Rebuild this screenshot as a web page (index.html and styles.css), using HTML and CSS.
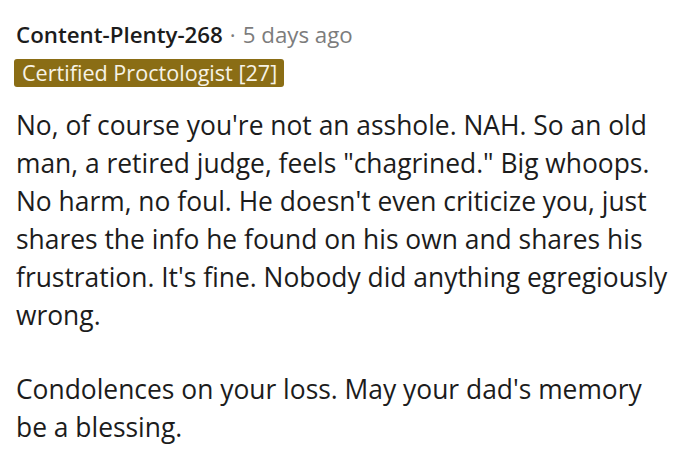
FILE: index.html
```html
<!DOCTYPE html>
<html>
<head>
<meta charset="utf-8">
<link rel="stylesheet" href="styles.css">
</head>
<body>
<div class="comment">
  <div class="meta">
    <span class="author">Content-Plenty-268</span>
    <span class="sep">·</span>
    <span class="time">5 days ago</span>
  </div>
  <div class="flair-row"><span class="flair">Certified Proctologist [27]</span></div>
  <div class="body">
    <p>No, of course you're not an asshole. NAH. So an old man, a retired judge, feels "chagrined." Big whoops. No harm, no foul. He doesn't even criticize you, just shares the info he found on his own and shares his frustration. It's fine. Nobody did anything egregiously wrong.</p>
    <p>Condolences on your loss. May your dad's memory be a blessing.</p>
  </div>
</div>
</body>
</html>
```

FILE: styles.css
```css
html, body {
  margin: 0;
  padding: 0;
  background: #ffffff;
}
body {
  font-family: "Open Sans", "Noto Sans", sans-serif;
  color: #1c1c1c;
}
.comment {
  padding: 21px 28px 0 16px;
  width: 656px;
}
.meta {
  display: flex;
  align-items: baseline;
  gap: 7px;
  font-size: 22.3px;
  line-height: 28px;
}
.author {
  font-weight: 600;
  color: #1c1c1c;
}
.sep, .time {
  color: #7c7c7c;
}
.flair-row {
  display: flex;
  margin-top: 10px;
  margin-left: -2px;
}
.flair {
  background: #8a6d15;
  color: #f7f3e6;
  font-size: 21.6px;
  line-height: 28px;
  padding: 0 7px 0 8px;
  border-radius: 3px;
}
.body {
  margin-top: 19px;
  font-size: 26.4px;
  line-height: 38px;
}
.body p {
  margin: 0 0 36px 0;
}
.body p:last-child {
  margin-bottom: 0;
}
```
